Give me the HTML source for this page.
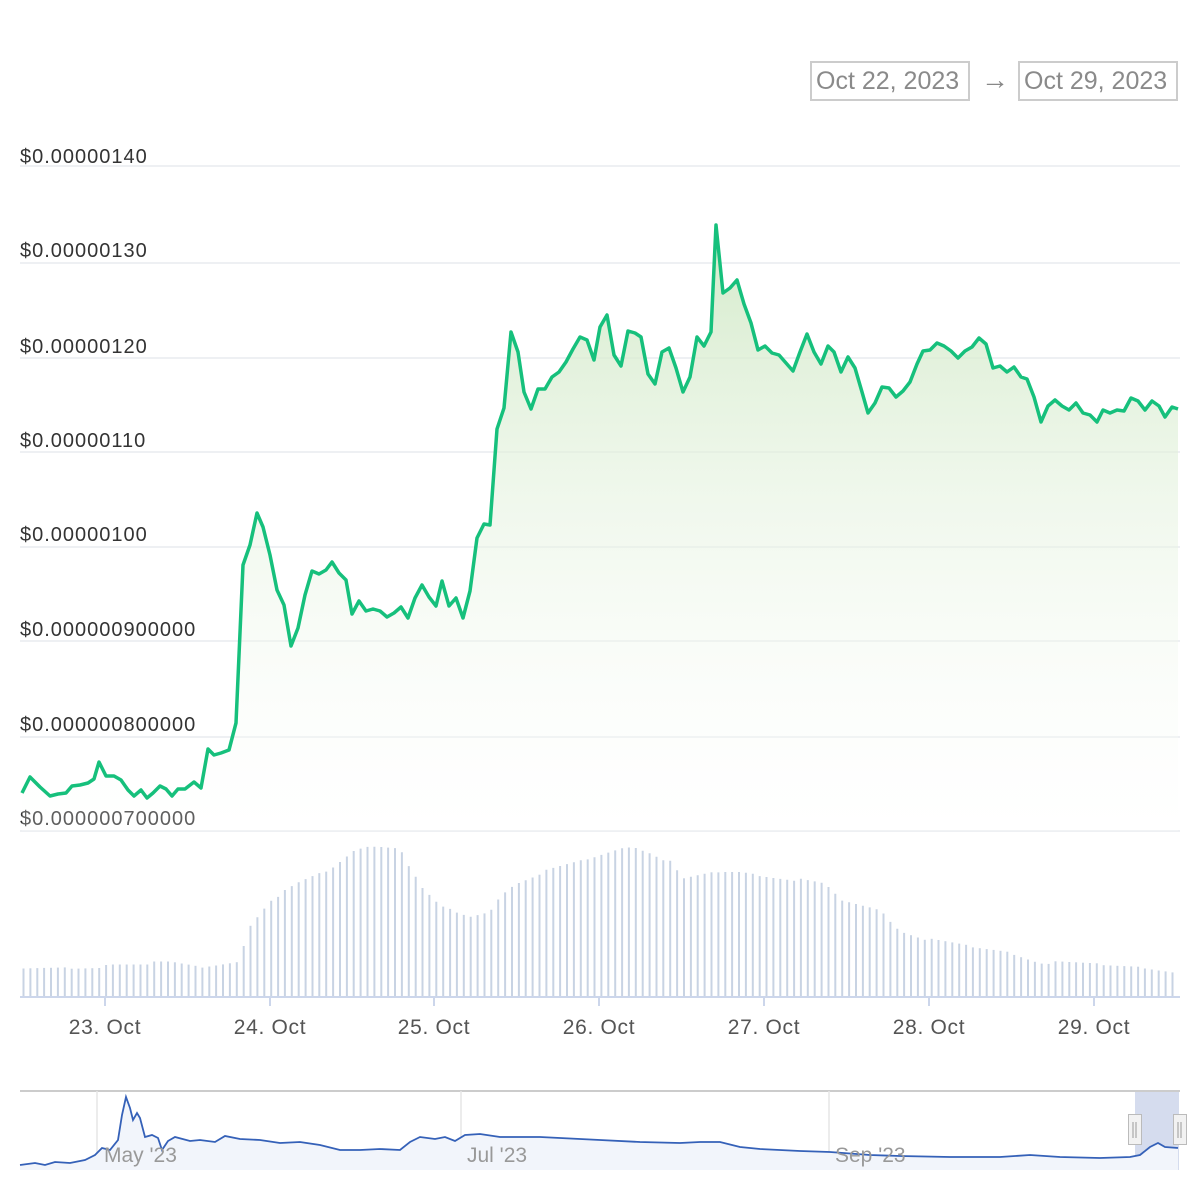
<!DOCTYPE html>
<html><head><meta charset="utf-8"><style>
html,body{margin:0;padding:0;background:#fff;}
body{width:1200px;height:1200px;position:relative;overflow:hidden;font-family:"Liberation Sans",Arial,sans-serif;}
.db{position:absolute;top:61px;height:40px;border:2px solid #ccc;box-sizing:border-box;color:#8a8a8a;font-size:25px;line-height:36px;padding-left:4px;}
</style></head><body>
<div class="db" style="left:810px;width:160px;">Oct 22, 2023</div>
<div style="position:absolute;left:981px;top:64px;font-size:28px;color:#888;">→</div>
<div class="db" style="left:1018px;width:160px;">Oct 29, 2023</div>
<svg id="s" width="1200" height="1200" style="position:absolute;left:0;top:0">
<defs><linearGradient id="g" x1="0" y1="0" x2="0" y2="1"><stop offset="0" stop-color="#cfe8c4" stop-opacity="0.9"/><stop offset="1" stop-color="#ffffff" stop-opacity="0.2"/></linearGradient></defs>
<g stroke="#eef0f3" stroke-width="2">
<line x1="20" x2="1180" y1="166" y2="166"/><line x1="20" x2="1180" y1="263" y2="263"/><line x1="20" x2="1180" y1="358" y2="358"/><line x1="20" x2="1180" y1="452" y2="452"/><line x1="20" x2="1180" y1="547" y2="547"/><line x1="20" x2="1180" y1="641" y2="641"/><line x1="20" x2="1180" y1="737" y2="737"/><line x1="20" x2="1180" y1="831" y2="831"/>
</g>
<g font-size="20" fill="#333" letter-spacing="1" font-family="Liberation Sans, sans-serif">
<text x="20" y="163">$0.00000140</text><text x="20" y="257">$0.00000130</text><text x="20" y="353">$0.00000120</text><text x="20" y="447">$0.00000110</text><text x="20" y="541">$0.00000100</text><text x="20" y="636">$0.000000900000</text><text x="20" y="731">$0.000000800000</text><text x="20" y="825">$0.000000700000</text>
</g>
<path id="area" fill="url(#g)"/>
<polyline id="line" fill="none" stroke="#16c07c" stroke-width="3.5" stroke-linejoin="round"/>
<g id="bars" stroke="#c8d3e3" stroke-width="2"></g>
<line x1="20" x2="1180" y1="997" y2="997" stroke="#ccd6eb" stroke-width="2"/>
<g stroke="#ccd6eb" stroke-width="2">
<line x1="105" x2="105" y1="997" y2="1006"/><line x1="270" x2="270" y1="997" y2="1006"/><line x1="434" x2="434" y1="997" y2="1006"/><line x1="599" x2="599" y1="997" y2="1006"/><line x1="764" x2="764" y1="997" y2="1006"/><line x1="929" x2="929" y1="997" y2="1006"/><line x1="1094" x2="1094" y1="997" y2="1006"/>
</g>
<g font-size="21" fill="#555" text-anchor="middle" letter-spacing="0.7" font-family="Liberation Sans, sans-serif">
<text x="105" y="1034">23. Oct</text><text x="270" y="1034">24. Oct</text><text x="434" y="1034">25. Oct</text><text x="599" y="1034">26. Oct</text><text x="764" y="1034">27. Oct</text><text x="929" y="1034">28. Oct</text><text x="1094" y="1034">29. Oct</text>
</g>
<line x1="20" x2="1180" y1="1091" y2="1091" stroke="#ccc" stroke-width="2"/>
<g stroke="#e6e6e6" stroke-width="1.5"><line x1="97" x2="97" y1="1091" y2="1170"/><line x1="461" x2="461" y1="1091" y2="1170"/><line x1="829" x2="829" y1="1091" y2="1170"/></g>
<rect x="1135" y="1092" width="44" height="78" fill="#d5dcee"/>
<path id="nava" fill="#f2f5fb"/>
<polyline id="navl" fill="none" stroke="#3561b8" stroke-width="1.8"/>
<g font-size="21" fill="#999" font-family="Liberation Sans, sans-serif"><text x="104" y="1162">May '23</text><text x="467" y="1162">Jul '23</text><text x="835" y="1162">Sep '23</text></g>
<g fill="#f2f2f2" stroke="#bbb" stroke-width="1"><rect x="1128.5" y="1114.5" width="13" height="30"/><rect x="1173.5" y="1114.5" width="13" height="30"/></g>
<g stroke="#999" stroke-width="1"><line x1="1133" x2="1133" y1="1122" y2="1138"/><line x1="1136" x2="1136" y1="1122" y2="1138"/><line x1="1178" x2="1178" y1="1122" y2="1138"/><line x1="1181" x2="1181" y1="1122" y2="1138"/></g>
</svg>
<script>
var p="22,793 30,777 40,787 50,796 58,794 66,793 72,786 80,785 88,783 94,779 99,762 106,776 114,776 121,780 128,790 134,796 141,790 147,798 153,793 160,786 166,789 172,796 178,789 185,789 194,782 201,788 208,749 214,755 221,753 229,750 236,723 243,565 250,545 257,513 263,527 270,555 277,590 284,605 291,646 298,628 305,595 312,571 319,574 326,570 332,562 339,573 346,580 352,614 359,601 366,611 373,609 380,611 387,617 394,613 401,607 408,618 415,598 422,585 429,597 436,606 442,581 449,606 456,598 463,618 470,591 477,538 484,524 490,525 497,429 504,408 511,332 518,352 524,392 531,409 538,389 545,389 552,377 559,372 566,362 573,349 580,337 587,340 594,360 600,327 607,315 614,355 621,366 628,331 635,333 641,337 648,374 655,384 662,352 669,348 676,368 683,392 690,377 697,337 704,346 711,332 716,225 723,293 730,288 737,280 744,304 751,323 758,350 765,346 772,353 779,355 786,363 793,371 800,352 807,334 814,352 821,364 828,346 834,352 841,372 848,357 855,368 862,392 868,413 875,403 882,387 889,388 896,397 903,391 910,382 917,364 923,351 930,350 937,343 944,346 951,351 958,358 965,351 972,347 979,338 986,344 993,368 1000,366 1007,372 1014,367 1021,377 1027,379 1034,397 1041,422 1048,406 1055,400 1062,406 1069,410 1076,403 1083,413 1090,415 1097,422 1103,410 1110,413 1117,410 1124,411 1131,398 1138,401 1145,410 1152,401 1159,406 1165,417 1172,407 1178,409";
document.getElementById('line').setAttribute('points',p);
document.getElementById('area').setAttribute('d','M22,831 L'+p.split(' ').join(' L')+' L1178,831 Z');
var env=[[22,970],[100,968],[110,963],[170,963],[200,968],[238,962],[250,925],[270,900],[300,883],[330,870],[355,850],[375,845],[400,847],[420,887],[440,907],[470,917],[490,912],[500,895],[515,883],[540,873],[580,862],[610,852],[632,845],[650,852],[670,862],[683,880],[720,872],[740,872],[800,880],[825,885],[840,900],[880,910],[900,930],[930,940],[970,947],[1010,952],[1040,962],[1100,965],[1145,967],[1180,972]];
function f(x){for(var i=0;i<env.length-1;i++){if(x<=env[i+1][0]){var a=env[i],b=env[i+1];return a[1]+(b[1]-a[1])*(x-a[0])/(b[0]-a[0]);}}return 972;}
var g=document.getElementById('bars'),h='';
for(var x=23.5;x<1178;x+=6.88){var y=f(x)+((Math.round(x*7)%3)-1)*1.5;h+='<line x1="'+x.toFixed(1)+'" x2="'+x.toFixed(1)+'" y1="'+y.toFixed(1)+'" y2="997"/>';}
g.innerHTML=h;
var n="20,1165 35,1163 45,1165 55,1162 70,1163 85,1160 95,1155 102,1148 110,1150 118,1140 122,1115 126,1097 130,1108 133,1120 137,1113 140,1118 145,1137 152,1135 158,1138 162,1150 168,1141 175,1137 190,1141 200,1140 215,1142 225,1136 240,1139 260,1140 280,1143 300,1142 320,1145 340,1150 360,1150 380,1149 400,1150 410,1142 420,1137 435,1139 445,1137 455,1141 465,1135 480,1134 500,1137 540,1137 560,1138 600,1140 640,1142 680,1143 700,1142 720,1142 740,1147 760,1149 800,1151 830,1152 870,1155 900,1156 950,1157 1000,1157 1030,1155 1060,1157 1100,1158 1130,1157 1140,1155 1150,1147 1158,1143 1165,1147 1178,1148";
document.getElementById('navl').setAttribute('points',n);
document.getElementById('nava').setAttribute('d','M20,1170 L'+n.split(' ').join(' L')+' L1178,1170 Z');
</script>
</body></html>
